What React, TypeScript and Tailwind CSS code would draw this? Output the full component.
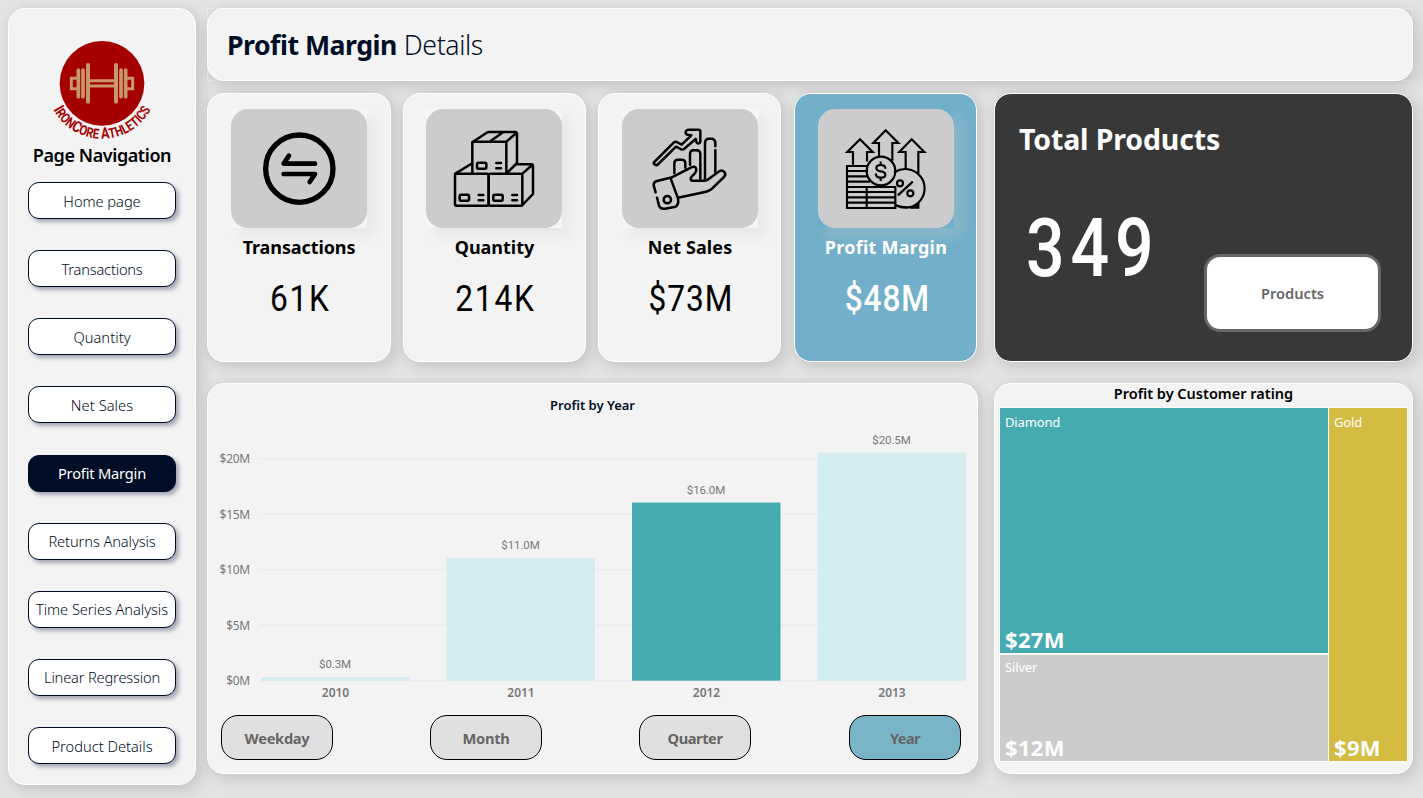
import type { ReactNode } from "react";

const NOTO = "font-['Noto_Sans','Open_Sans',sans-serif]";
const PANEL =
  "border border-white bg-[#f3f3f3] shadow-[5px_5px_14px_2px_rgba(0,0,0,0.1),0_0_10px_rgba(0,0,0,0.04)]";

const NAV = [
  { label: "Home page", tracking: "tracking-[-0.05px]" },
  { label: "Transactions", tracking: "tracking-[-0.2px]" },
  { label: "Quantity", tracking: "tracking-[0.05px]" },
  { label: "Net Sales", tracking: "tracking-[0.05px]" },
  { label: "Profit Margin", tracking: "tracking-[-0.2px]", active: true },
  { label: "Returns Analysis", tracking: "tracking-[-0.1px]" },
  { label: "Time Series Analysis", tracking: "tracking-[-0.06px]" },
  { label: "Linear Regression", tracking: "tracking-[-0.18px]" },
  { label: "Product Details", tracking: "tracking-normal" },
];

function Logo() {
  return (
    <svg width="110" height="110" viewBox="0 0 330 330">
      <circle cx="165" cy="142" r="127" fill="#a50000" />
      <g stroke="#c9976a" fill="none" strokeLinecap="round">
        <path d="M123 87V197M207 87V197" strokeWidth="12" />
        <path d="M108 102V182M222 102V182M94 102V182M236 102V182" strokeWidth="11" />
        <path d="M129 134H201M129 150H201" strokeWidth="9" strokeLinecap="butt" />
        <path d="M90 127H73V158H90M240 127H257V158H240" strokeWidth="9" />
      </g>
      <path id="arc" d="M-1 142A166 166 0 0 0 331 142" fill="none" />
      <text fill="#a50000" fontFamily="Roboto, sans-serif" fontWeight="700" fontSize="41">
        <textPath href="#arc" startOffset="50%" textAnchor="middle" textLength="358" lengthAdjust="spacingAndGlyphs">
          <tspan fontSize="47">I</tspan>RON<tspan fontSize="47">C</tspan>ORE <tspan fontSize="47">A</tspan>THLETICS
        </textPath>
      </text>
    </svg>
  );
}

function TransferIcon() {
  return (
    <svg className="block h-full w-full" viewBox="93 72 408 357" fill="none" stroke="#000" strokeLinecap="round" strokeLinejoin="round">
      <circle cx="298" cy="251" r="101" strokeWidth="16" />
      <path d="M267 212L251 236H345M251 267H345L329 291" strokeWidth="14" />
    </svg>
  );
}

function BoxesIcon() {
  return (
    <svg className="block h-full w-full" viewBox="78 72 408 357" fill="none" stroke="#000" strokeWidth="7.5" strokeLinecap="round" strokeLinejoin="round">
      <path d="M217 265V174Q217 170 221 170H315Q319 170 319 174V265" />
      <path d="M218 171L260 143Q263 141 267 141H345Q351 141 351 147V234L321 264M319 170L349 144M272 168L307 143" />
      <rect x="165" y="266" width="101" height="96" rx="5" />
      <rect x="266" y="266" width="101" height="96" rx="5" />
      <path d="M166 266L213 237M350 238H394Q399 238 399 243V327L366 361M367 266L397 240" />
      <rect x="231" y="233" width="28" height="18" rx="4" />
      <path d="M289 234H303M289 250H303M236 330H250M236 346H250M337 330H351M337 346H351" />
      <rect x="179" y="329" width="28" height="18" rx="4" />
      <rect x="280" y="329" width="28" height="18" rx="4" />
    </svg>
  );
}

function HandChartIcon() {
  return (
    <svg className="block h-full w-full" viewBox="-69 -33 408 357" fill="none" stroke="#000" strokeWidth="7.5" strokeLinecap="round" strokeLinejoin="round">
      <path d="M28 126L86 68Q90 64 95 66L110 74L139 46L127 44Q121 42 122 36Q124 29 131 29H161Q166 29 166 34V65Q165 71 159 70Q154 69 154 63L152 57L117 87Q113 90 109 88L93 80L40 132Q34 138 28 133Q24 129 28 126Z" />
      <path d="M88 160V130Q88 119 99 119H110Q121 119 121 130V143M135 134V103Q135 91 146 91H154Q166 91 166 103V177M180 178V70Q180 56 192 56H198Q211 56 211 70V79M211 91V158" />
      <path d="M79 173L139 142Q152 136 154 149Q154 155 148 162Q137 171 137 177Q137 182 144 182H178Q185 182 190 178L224 153Q231 149 238 156Q244 163 237 171L201 206Q192 213 183 215L99 233" />
      <path d="M32 217L26 196Q25 186 36 183L76 173L99 235Q102 254 92 260L60 266Q47 268 42 257L36 233" />
      <circle cx="67" cy="239" r="11" />
    </svg>
  );
}

function ProfitIcon() {
  return (
    <svg className="block h-full w-full" viewBox="99 72 408 357" fill="none" stroke="#000" strokeWidth="6.5" strokeLinecap="square">
      <path d="M204 240V201H187L225 163L263 201H246V226M282 211V174H265L302 136L340 174H322V224M362 248V201H343L380 163L418 201H400V262" />
      <path d="M244 243H186V369H331V306H186M186 258H246M186 274H246M186 290H252M186 321H330M186 337H330M186 353H330M245 306V369" />
      <path d="M384 368H400V356L392 362Z" fill="#000" />
      <path d="M333 361A58 58 0 1 0 330 261M333 361Q355 370 384 366" />
      <circle cx="288" cy="258" r="43" />
      <path d="M301 248Q299 240 287 240Q274 240 274 249Q274 257 287 259Q301 261 301 269Q301 278 288 278Q275 278 273 269M287 233V240M287 278V285" />
      <path d="M341 329L381 292" />
      <circle cx="345" cy="295" r="9" />
      <circle cx="376" cy="325" r="9" />
    </svg>
  );
}

type KpiProps = {
  label: string;
  value: string;
  icon: ReactNode;
  className: string;
  iconClass?: string;
  labelClass?: string;
  valueClass?: string;
  active?: boolean;
};

function KpiCard({ label, value, icon, className, iconClass = "", labelClass = "", valueClass = "", active }: KpiProps) {
  return (
    <div className={`flex h-[269px] shrink-0 flex-col items-center rounded-[17px] pt-[15px] ${PANEL} ${active ? "!bg-[#73afca] text-white" : "text-black"} ${className}`}>
      <div className={`h-[119px] w-[136px] ${iconClass} ${active ? "bg-[#6dafcd] shadow-[8px_8px_12px_rgba(200,200,200,0.3)]" : "bg-[#f6f6f6] shadow-[8px_8px_12px_rgba(0,0,0,0.05)]"}`}>
        <div className="h-full w-full rounded-[17px] bg-[#ccc]">{icon}</div>
      </div>
      <div className={`mt-[7px] text-[18px] leading-6 font-bold whitespace-nowrap ${labelClass}`}>{label}</div>
      <div className={`mt-5 scale-x-88 pl-[3px] font-[Roboto,sans-serif] text-[36px] leading-[41px] whitespace-nowrap ${valueClass}`}>{value}</div>
    </div>
  );
}

const BARS = [
  { year: "2010", text: "$0.3M", value: 0.31, fill: "#d3ecef" },
  { year: "2011", text: "$11.0M", value: 11.05, fill: "#d3ecef" },
  { year: "2012", text: "$16.0M", value: 16.05, fill: "#46abb0" },
  { year: "2013", text: "$20.5M", value: 20.55, fill: "#d3ecef" },
];

function BarChart() {
  const base = 256.7;
  const scale = 11.1;
  return (
    <svg className="block" width="769" height="290" viewBox="0 0 769 290">
      {[0, 5, 10, 15, 20].map((v) => (
        <g key={v}>
          <line x1="52" x2="757" y1={base - v * scale} y2={base - v * scale} stroke="#eaeaea" strokeWidth="1.3" />
          <text x="42" y={base + 4.5 - v * scale} textAnchor="end" fill="#777" fontSize="12" letterSpacing="-0.25" fontFamily="Noto Sans, sans-serif">{`$${v}M`}</text>
        </g>
      ))}
      {BARS.map((b, i) => {
        const x = 53 + i * 185.5;
        const h = b.value * scale;
        return (
          <g key={b.year} textAnchor="middle">
            <rect x={x} y={base - h} width="148.5" height={h} fill={b.fill} />
            <text x={x + 74} y={base - h - 9} fill="#777" fontSize="11.5" letterSpacing="-0.1" fontFamily="Roboto, sans-serif">{b.text}</text>
            <text x={x + 74.5} y="272.7" fill="#777" fontSize="12" fontWeight="600" fontFamily="Noto Sans, sans-serif">{b.year}</text>
          </g>
        );
      })}
    </svg>
  );
}

const PERIODS = [
  { label: "Weekday", style: "bg-[#e0e0e0] tracking-[-0.3px]" },
  { label: "Month", style: "bg-[#e0e0e0] tracking-[-0.3px]" },
  { label: "Quarter", style: "bg-[#e0e0e0] tracking-[-0.45px]" },
  { label: "Year", style: "bg-[#7ab5c7] tracking-[-0.6px] ml-px" },
];

function Tile({ name, value, className }: { name: string; value: string; className: string }) {
  return (
    <div className={`flex flex-col justify-between pl-[5px] outline outline-white/60 ${className}`}>
      <span className="leading-5 tracking-[-0.15px]">{name}</span>
      <b className="text-[22px] leading-[28px] tracking-[0.3px]">{value}</b>
    </div>
  );
}

export default function App() {
  return (
    <div className={`flex h-[798px] w-[1423px] overflow-hidden bg-[#e3e3e3] pt-2 pl-2 ${NOTO}`}>
      <aside className={`mr-[11px] flex h-[777px] w-[188px] shrink-0 flex-col items-center rounded-[17px] ${PANEL}`}>
        <div className="mt-[27px] h-[107px] w-[110px]"><Logo /></div>
        <div className="text-[18px] leading-6 font-semibold tracking-[-0.42px] whitespace-nowrap text-black">Page Navigation</div>
        <nav className="mt-[15px] flex h-[582px] flex-col justify-between">
          {NAV.map((n) => (
            <button
              key={n.label}
              className={`flex h-[37px] w-[148px] items-center justify-center rounded-[11px] border border-[#000d26] text-[14.67px] whitespace-nowrap shadow-[3px_3px_4px_rgba(0,0,50,0.32)] ${n.tracking} ${n.active ? "bg-[#000d26] text-white" : "bg-white font-light text-[#000d26]"}`}
            >
              {n.label}
            </button>
          ))}
        </nav>
      </aside>
      <main className="flex w-[1206px] shrink-0 flex-col">
        <header className="h-[73px] border border-[#ebebeb] bg-[#e0e0e0]">
          <div className={`-m-px flex h-[73px] items-center gap-[7px] rounded-[17px] pt-px pl-[19px] text-[26.67px] text-[#000d26] ${PANEL}`}>
            <span className="font-bold tracking-[-0.5px]">Profit Margin</span>
            <span className="font-light tracking-[-0.4px]">Details</span>
          </div>
        </header>
        <section className="mt-3 flex">
          <KpiCard className="w-[184px]" label="Transactions" value="61K" labelClass="tracking-[-0.1px]" valueClass="tracking-[2px]" icon={<TransferIcon />} />
          <KpiCard className="ml-3 w-[183px]" label="Quantity" value="214K" iconClass="mr-px" valueClass="tracking-[2px]" icon={<BoxesIcon />} />
          <KpiCard className="ml-3 w-[183px]" label="Net Sales" value="$73M" labelClass="tracking-[0.1px] pl-px" valueClass="tracking-[1px]" icon={<HandChartIcon />} />
          <KpiCard className="ml-[13px] w-[183px]" label="Profit Margin" value="$48M" labelClass="tracking-[0.25px] pl-px" valueClass="tracking-[1px] font-medium" active icon={<ProfitIcon />} />
          <div className={`ml-[17px] h-[269px] flex-1 rounded-[17px] pt-[27px] text-white ${PANEL} !bg-[#383838]`}>
            <div className="pl-6 text-[28.5px] leading-9 font-bold tracking-[-0.15px]">Total Products</div>
            <div className="mt-[51px] flex">
              <div className="w-[209px] pl-[31px] font-[Roboto,sans-serif] text-[81px] leading-[82px] font-medium">
                <span className="inline-block origin-left scale-x-84 tracking-[7px]">349</span>
              </div>
              <button className="mt-[46px] flex h-[78px] w-[177px] items-center justify-center rounded-[16px] border-[3.5px] border-[#666] bg-white text-[14.67px] font-semibold text-[#666]">Products</button>
            </div>
          </div>
        </section>
        <section className="mt-[21px] flex">
          <div className={`h-[391px] w-[771px] rounded-[17px] pt-[11px] ${PANEL}`}>
            <div className="text-center text-[13px] leading-5 font-semibold text-[#000d26]">Profit by Year</div>
            <div className="mt-[9px] h-[291px]"><BarChart /></div>
            <div className="flex justify-between pr-[16px] pl-[13px]">
              {PERIODS.map((p) => (
                <button key={p.label} className={`flex h-[45px] w-[112px] items-center justify-center rounded-[17px] border border-black text-[14.67px] font-bold text-[#666] ${p.style}`}>{p.label}</button>
              ))}
            </div>
          </div>
          <div className={`ml-4 h-[391px] flex-1 rounded-[17px] px-[5px] ${PANEL}`}>
            <div className="-mt-px text-center text-[14.5px] leading-5 font-semibold text-black">Profit by Customer rating</div>
            <div className="mt-[5px] grid h-[353px] grid-cols-[328px_78px] grid-rows-[245px_106px] gap-x-px gap-y-[2px] text-[13px] text-white">
              <Tile name="Diamond" value="$27M" className="bg-[#46abb0] pt-1" />
              <Tile name="Gold" value="$9M" className="row-span-2 bg-[#d4bb41] pt-1" />
              <Tile name="Silver" value="$12M" className="bg-[#ccc] pt-[2px]" />
            </div>
          </div>
        </section>
      </main>
    </div>
  );
}
